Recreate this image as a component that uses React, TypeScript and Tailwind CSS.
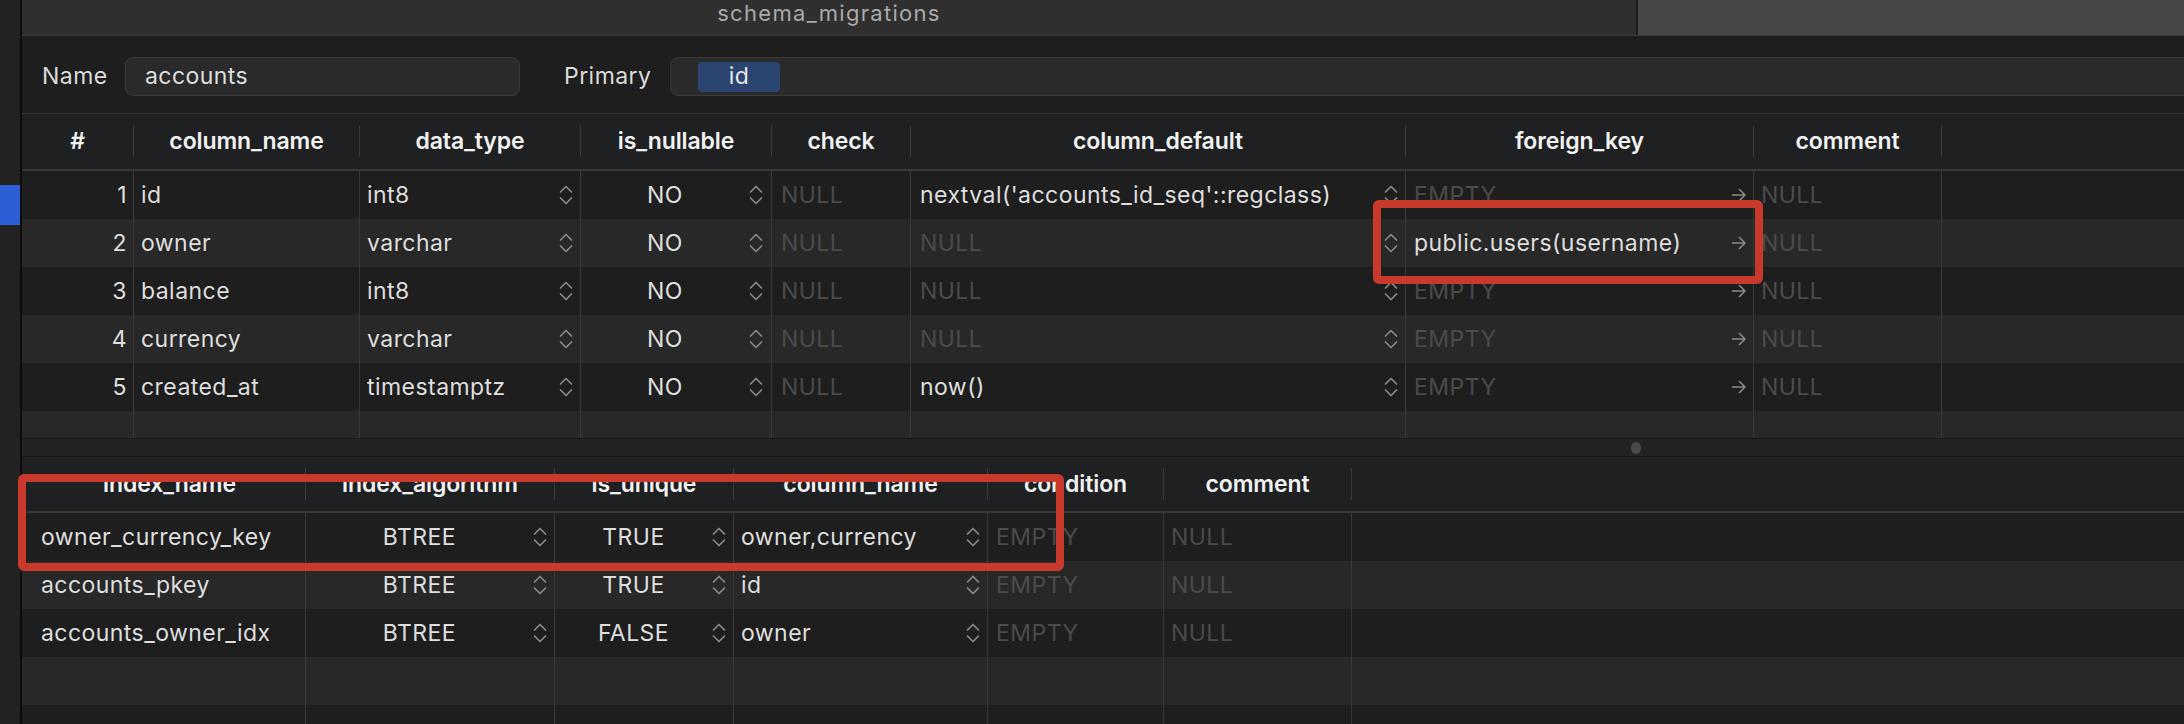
import React from "react";

const Chevrons = () => (
  <svg width="14" height="24" viewBox="0 0 14 24" className="shrink-0">
    <path d="M1.5 9 L7 3.5 L12.5 9" fill="none" stroke="#8a8a8a" strokeWidth="1.7" strokeLinecap="round" strokeLinejoin="round" />
    <path d="M1.5 15 L7 20.5 L12.5 15" fill="none" stroke="#8a8a8a" strokeWidth="1.7" strokeLinecap="round" strokeLinejoin="round" />
  </svg>
);

const Arrow = () => (
  <svg width="16" height="16" viewBox="0 0 16 16" className="shrink-0">
    <path d="M1.5 8 H14 M8.5 2.5 L14 8 L8.5 13.5" fill="none" stroke="#8a8a8a" strokeWidth="1.6" strokeLinecap="round" strokeLinejoin="round" />
  </svg>
);

const Ph = ({ t }: { t: string }) => <span className="text-[#4b4b4b]">{t}</span>;

const mainHeaders: { cls: string; title: string }[] = [
  { cls: "w-[112px]", title: "#" },
  { cls: "w-[226px]", title: "column_name" },
  { cls: "w-[221px]", title: "data_type" },
  { cls: "w-[191px]", title: "is_nullable" },
  { cls: "w-[139px]", title: "check" },
  { cls: "w-[495px]", title: "column_default" },
  { cls: "w-[348px]", title: "foreign_key" },
  { cls: "w-[188px]", title: "comment" },
];

const rows = [
  { n: 1, name: "id", type: "int8", def: "nextval('accounts_id_seq'::regclass)", fk: "" },
  { n: 2, name: "owner", type: "varchar", def: "", fk: "public.users(username)" },
  { n: 3, name: "balance", type: "int8", def: "", fk: "" },
  { n: 4, name: "currency", type: "varchar", def: "", fk: "" },
  { n: 5, name: "created_at", type: "timestamptz", def: "now()", fk: "" },
];

const idxHeaders: { cls: string; title: string; extra?: string }[] = [
  { cls: "w-[284px]", title: "index_name", extra: "pl-[12px]" },
  { cls: "w-[249px]", title: "index_algorithm" },
  { cls: "w-[179px]", title: "is_unique" },
  { cls: "w-[254px]", title: "column_name" },
  { cls: "w-[176px]", title: "condition" },
  { cls: "w-[188px]", title: "comment" },
];

const idxRows = [
  { name: "owner_currency_key", uniq: "TRUE", col: "owner,currency" },
  { name: "accounts_pkey", uniq: "TRUE", col: "id" },
  { name: "accounts_owner_idx", uniq: "FALSE", col: "owner" },
];

const line = "border-r border-[#383838]";

export default function App() {
  return (
    <div className="relative w-[2184px] h-[724px] overflow-hidden flex bg-[#1e1e1e] text-[#dedede] text-[23px] tracking-[0.45px] font-['Inter','Noto_Sans',sans-serif]">
      {/* left strip */}
      <div className="w-[22px] shrink-0 bg-[#222222] border-r-2 border-[#0c0c0c] flex flex-col">
        <div className="mt-[185px] h-[40px] w-[20px] bg-[#2c5fd6]" />
      </div>

      {/* main */}
      <div className="flex-1 flex flex-col min-w-0">
        {/* title bar */}
        <div className="h-[36px] shrink-0 flex border-b border-[#3b3b3b]">
          <div className="flex-1 bg-[#2f2f2f] flex items-start justify-center pt-[1px]">
            <span className="text-[#a9a9a9] text-[22px] leading-[24px] tracking-[1.3px]">schema_migrations</span>
          </div>
          <div className="w-[2px] bg-[#1c1c1c]" />
          <div className="w-[546px] bg-[#474747]" />
        </div>

        {/* form row */}
        <div className="mt-[21px] h-[39px] shrink-0 flex items-center pl-[20px]">
          <span className="text-[#dcdcdc] w-[83px]">Name</span>
          <div className="w-[395px] h-[39px] rounded-[8px] bg-[#2a2a2a] border border-[#3a3a3a] flex items-center pl-[19px]">
            accounts
          </div>
          <span className="ml-[44px] w-[106px] text-[#dcdcdc]">Primary</span>
          <div className="flex-1 -mr-[20px] h-[39px] rounded-[8px] bg-[#2a2a2a] border border-[#3a3a3a] flex items-center pl-[27px]">
            <div className="w-[82px] h-[30px] rounded-[4px] bg-[#2b4470] flex items-center justify-center text-[#e8e8e8]">id</div>
          </div>
        </div>

        {/* main table header */}
        <div className="mt-[17px] h-[58px] shrink-0 flex bg-[#1f2022] border-t border-[#333333] border-b-2 border-b-[#383838] font-semibold tracking-[-0.1px] text-[#f2f2f2]">
          {mainHeaders.map((h) => (
            <div key={h.title} className={`${h.cls} shrink-0 flex items-center`}>
              <span className="flex-1 text-center">{h.title}</span>
              <div className="w-px h-[31px] bg-[#3a3a3a]" />
            </div>
          ))}
          <div className="flex-1" />
        </div>

        {/* main rows */}
        {rows.map((r, i) => (
          <div key={r.n} className={`h-[48px] shrink-0 flex ${i % 2 === 0 ? "bg-[#1e1e1e]" : "bg-[#282828]"}`}>
            <div className={`w-[112px] shrink-0 ${line} flex items-center justify-end pr-[6px]`}>{r.n}</div>
            <div className={`w-[226px] shrink-0 ${line} flex items-center pl-[7px]`}>{r.name}</div>
            <div className={`w-[221px] shrink-0 ${line} flex items-center pl-[7px] pr-[7px]`}>
              <span className="flex-1">{r.type}</span>
              <Chevrons />
            </div>
            <div className={`w-[191px] shrink-0 ${line} flex items-center pr-[8px]`}>
              <span className="flex-1 text-center">NO</span>
              <Chevrons />
            </div>
            <div className={`w-[139px] shrink-0 ${line} flex items-center pl-[9px]`}>
              <Ph t="NULL" />
            </div>
            <div className={`w-[495px] shrink-0 ${line} flex items-center pl-[9px] pr-[7px]`}>
              <span className="flex-1">{r.def ? r.def : <Ph t="NULL" />}</span>
              <Chevrons />
            </div>
            <div className={`w-[348px] shrink-0 ${line} flex items-center pl-[8px] pr-[6px]`}>
              <span className="flex-1">{r.fk ? r.fk : <Ph t="EMPTY" />}</span>
              <Arrow />
            </div>
            <div className={`w-[188px] shrink-0 ${line} flex items-center pl-[7px]`}>
              <Ph t="NULL" />
            </div>
            <div className="flex-1" />
          </div>
        ))}
        <div className="h-[27px] shrink-0 flex bg-[#282828]">
          {mainHeaders.map((h) => (
            <div key={h.title} className={`${h.cls} shrink-0 ${line}`} />
          ))}
        </div>

        {/* splitter */}
        <div className="h-[19px] shrink-0 bg-[#232323] border-t border-b border-[#181818] flex items-center pl-[1609px]">
          <div className="w-[10px] h-[12px] rounded-full bg-[#4a4a4a]" />
        </div>

        {/* index header */}
        <div className="h-[56px] shrink-0 flex bg-[#1f2022] border-b-2 border-[#383838] font-semibold tracking-[-0.1px] text-[#f2f2f2]">
          {idxHeaders.map((h) => (
            <div key={h.title} className={`${h.cls} shrink-0 flex items-center`}>
              <span className={`flex-1 text-center ${h.extra ?? ""}`}>{h.title}</span>
              <div className="w-px h-[32px] bg-[#3a3a3a]" />
            </div>
          ))}
          <div className="flex-1" />
        </div>

        {/* index rows */}
        {[0, 1, 2, 3, 4].map((i) => {
          const r = idxRows[i];
          return (
            <div key={i} className={`h-[48px] shrink-0 flex ${i % 2 === 0 ? "bg-[#1e1e1e]" : "bg-[#282828]"}`}>
              <div className={`w-[284px] shrink-0 ${line} flex items-center pl-[19px]`}>{r ? r.name : ""}</div>
              <div className={`w-[249px] shrink-0 ${line} flex items-center pr-[7px]`}>
                {r && (
                  <>
                    <span className="flex-1 text-center">BTREE</span>
                    <Chevrons />
                  </>
                )}
              </div>
              <div className={`w-[179px] shrink-0 ${line} flex items-center pr-[7px]`}>
                {r && (
                  <>
                    <span className="flex-1 text-center">{r.uniq}</span>
                    <Chevrons />
                  </>
                )}
              </div>
              <div className={`w-[254px] shrink-0 ${line} flex items-center pl-[7px] pr-[7px]`}>
                {r && (
                  <>
                    <span className="flex-1">{r.col}</span>
                    <Chevrons />
                  </>
                )}
              </div>
              <div className={`w-[176px] shrink-0 ${line} flex items-center pl-[8px]`}>{r && <Ph t="EMPTY" />}</div>
              <div className={`w-[188px] shrink-0 ${line} flex items-center pl-[7px]`}>{r && <Ph t="NULL" />}</div>
              <div className="flex-1" />
            </div>
          );
        })}
      </div>

      {/* annotation boxes */}
      <div className="absolute left-[1373px] top-[200px] w-[390px] h-[84px] border-[8px] border-[#c93a2c] rounded-[6px]" />
      <div className="absolute left-[18px] top-[474px] w-[1046px] h-[97px] border-[8px] border-[#c93a2c] rounded-[6px]" />
    </div>
  );
}
